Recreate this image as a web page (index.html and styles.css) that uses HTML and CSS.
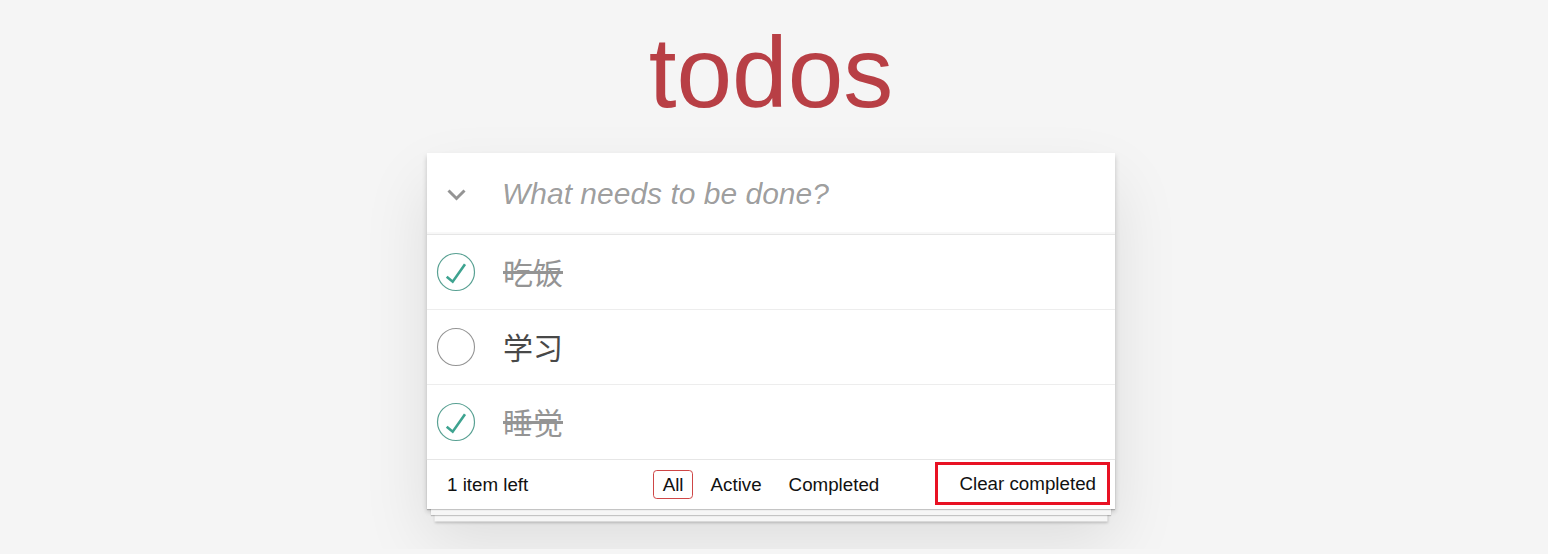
FILE: index.html
```html
<!DOCTYPE html>
<html lang="zh-CN">
<head>
  <meta charset="UTF-8">
  <meta name="viewport" content="width=device-width, initial-scale=1.0">
  <title>Todos</title>
  <link rel="stylesheet" href="styles.css">
</head>
<body>

  <div class="page">
    <h1 class="title">todos</h1>

    <section class="todoapp">
      <!-- New todo -->
      <header class="header">
        <span class="toggle-all">
          <svg width="19" height="12" viewBox="0 0 19 12"><polyline points="1.5,1.5 9.5,9.5 17.5,1.5" fill="none" stroke="#949494" stroke-width="3"/></svg>
        </span>
        <input class="new-todo" type="text" placeholder="What needs to be done?">
      </header>

      <!-- List -->
      <ul class="todo-list">
        <li class="todo completed">
          <span class="check">
            <svg width="40" height="40" viewBox="0 0 40 40"><circle cx="20" cy="20" r="18.5" fill="none" stroke="#59a193" stroke-width="1.2"/><polyline points="10.7,24.7 16.7,29.7 29,12.3" fill="none" stroke="#3ea390" stroke-width="2.6"/></svg>
          </span>
          <label class="todo-label">吃饭</label>
        </li>
        <li class="todo">
          <span class="check">
            <svg width="40" height="40" viewBox="0 0 40 40"><circle cx="20" cy="20" r="18.5" fill="none" stroke="#949494" stroke-width="1.1"/></svg>
          </span>
          <label class="todo-label">学习</label>
        </li>
        <li class="todo completed">
          <span class="check">
            <svg width="40" height="40" viewBox="0 0 40 40"><circle cx="20" cy="20" r="18.5" fill="none" stroke="#59a193" stroke-width="1.2"/><polyline points="10.7,24.7 16.7,29.7 29,12.3" fill="none" stroke="#3ea390" stroke-width="2.6"/></svg>
          </span>
          <label class="todo-label">睡觉</label>
        </li>
      </ul>

      <!-- Footer -->
      <footer class="footer">
        <span class="todo-count">1 item left</span>
        <ul class="filters">
          <li><a class="selected" href="#/">All</a></li>
          <li><a href="#/active">Active</a></li>
          <li><a href="#/completed">Completed</a></li>
        </ul>
        <button class="clear-completed">Clear completed</button>
      </footer>
    </section>
  </div>

</body>
</html>
```

FILE: styles.css
```css
/* ====== RESET ====== */
html, body {
  margin: 0;
  padding: 0;
}

ul {
  margin: 0;
  padding: 0;
  list-style: none;
}

/* ====== GLOBAL STYLES ====== */
body {
  background-color: #f5f5f5;
  color: #111111;
  font-family: 'Liberation Sans', Arial, 'Noto Sans CJK SC', sans-serif;
  font-size: 18.75px;
}

.page {
  width: 1542px;
}

.title {
  margin: 22px 0 0;
  height: 100px;
  line-height: 100px;
  font-size: 100px;
  font-weight: 200;
  text-align: center;
  color: #b83f45;
}

.todoapp {
  position: relative;
  width: 688px;
  margin: 31px auto 40px;
  background: #fff;
  box-shadow: 0 2.5px 5px rgba(0, 0, 0, 0.2), 0 31px 62px rgba(0, 0, 0, 0.1);
}

/* Header */
.header {
  display: flex;
  align-items: center;
  height: 81px;
  padding-left: 20px;
  box-shadow: inset 0 -2px 1px rgba(0, 0, 0, 0.03);
}

.toggle-all {
  display: flex;
  width: 19px;
  margin-right: 36px;
  padding-top: 2px;
}

.new-todo {
  flex: 1;
  height: 100%;
  padding: 0;
  border: none;
  outline: none;
  background: transparent;
  font-family: 'Liberation Sans', Arial, sans-serif;
  font-size: 30px;
  color: #484848;
}

.new-todo::placeholder {
  font-style: italic;
  font-weight: 400;
  color: rgba(0, 0, 0, 0.4);
}

/* List */
.todo-list {
  border-top: 1px solid #e6e6e6;
}

.todo {
  display: flex;
  align-items: center;
  height: 74px;
  border-bottom: 1px solid #ededed;
}

.todo:last-child {
  border-bottom: none;
}

.check {
  display: flex;
  width: 40px;
  margin: 0 27px 0 9px;
}

.todo-label {
  font-family: 'Noto Sans CJK SC', sans-serif;
  font-size: 30px;
  line-height: 42px;
  color: #484848;
  padding-bottom: 2px;
}

.completed .todo-label {
  color: #949494;
  text-decoration: line-through;
}

/* Footer */
.footer {
  position: relative;
  display: grid;
  grid-template-columns: 1fr auto 1fr;
  align-items: center;
  height: 49px;
  padding: 0 20px;
  border-top: 1px solid #e6e6e6;
}

.footer::before {
  content: '';
  position: absolute;
  left: 0;
  right: 0;
  bottom: 0;
  height: 50px;
  overflow: hidden;
  box-shadow: 0 1px 1px rgba(0, 0, 0, 0.2),
              0 10px 0 -4px #f6f6f6,
              0 11px 1px -4px rgba(0, 0, 0, 0.2),
              0 20px 0 -7.5px #f6f6f6,
              0 21px 2.5px -7.5px rgba(0, 0, 0, 0.2);
}

.todo-count {
  justify-self: start;
  line-height: 22px;
}

.filters {
  display: flex;
  position: relative;
}

.filters li {
  margin: 0 3.75px;
}

.filters a {
  display: block;
  padding: 3.5px 8.75px;
  line-height: 20px;
  color: inherit;
  text-decoration: none;
  border: 1px solid transparent;
  border-radius: 3.75px;
}

.filters a.selected {
  border-color: #ce4646;
}

.clear-completed {
  justify-self: end;
  position: relative;
  height: 43px;
  margin: 0 -15px 2px 0;
  padding: 0 11px 0 21px;
  background: none;
  border: 3px solid #e81123;
  font-family: inherit;
  font-size: 18.75px;
  color: #111111;
  cursor: pointer;
}
```
